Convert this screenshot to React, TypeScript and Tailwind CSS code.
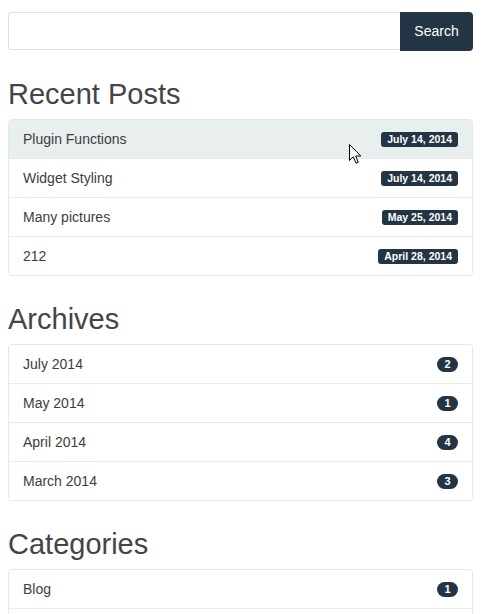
import React from "react";

const font = { fontFamily: '"Liberation Sans", Arial, Helvetica, sans-serif' };

type Row = { label: string; badge: string; kind: "date" | "count"; active?: boolean };

function Badge({ text, kind }: { text: string; kind: "date" | "count" }) {
  if (!text) return null;
  if (kind === "date") {
    return (
      <span className="inline-flex items-center h-[15px] px-[6px] rounded-[3px] bg-[#233444] text-white text-[10.5px] font-bold leading-none pt-[1px]">
        {text}
      </span>
    );
  }
  return (
    <span className="inline-flex items-center justify-center h-[15px] min-w-[21px] px-[6px] rounded-full bg-[#233444] text-white text-[11px] font-bold leading-none">
      {text}
    </span>
  );
}

function Section({ title, rows }: { title: string; rows: Row[] }) {
  return (
    <section>
      <h3 className="mt-[28px] mb-[9px] text-[29px] leading-[31px] text-[#454545] font-normal">{title}</h3>
      <ul className="border border-[#e4e8ea] rounded-[4px] overflow-hidden">
        {rows.map((r, i) => (
          <li
            key={i}
            className={
              "flex items-center justify-between h-[38px] px-[14px] text-[14px] leading-[18px] text-[#3d3d3d] box-content " +
              (i > 0 ? "border-t border-[#e8ebec] " : "") +
              (r.active ? "bg-[#e9eeee]" : "bg-white")
            }
          >
            <span>{r.label}</span>
            <Badge text={r.badge} kind={r.kind} />
          </li>
        ))}
      </ul>
    </section>
  );
}

export default function App() {
  return (
    <div className="relative bg-white w-[487px] h-[614px] overflow-hidden" style={font}>
      <div className="pt-[12px] pl-[8px] pr-[14px]">
        <form className="flex items-start h-[39px]" onSubmit={(e) => e.preventDefault()}>
          <input
            type="text"
            className="flex-1 min-w-0 h-[38px] border border-[#dae1e8] border-r-0 rounded-l-[4px] px-3 text-[14px] outline-none"
          />
          <button
            type="submit"
            className="w-[73px] h-[39px] bg-[#233444] text-white text-[14px] rounded-r-[4px]"
          >
            Search
          </button>
        </form>

        <Section
          title="Recent Posts"
          rows={[
            { label: "Plugin Functions", badge: "July 14, 2014", kind: "date", active: true },
            { label: "Widget Styling", badge: "July 14, 2014", kind: "date" },
            { label: "Many pictures", badge: "May 25, 2014", kind: "date" },
            { label: "212", badge: "April 28, 2014", kind: "date" },
          ]}
        />
        <Section
          title="Archives"
          rows={[
            { label: "July 2014", badge: "2", kind: "count" },
            { label: "May 2014", badge: "1", kind: "count" },
            { label: "April 2014", badge: "4", kind: "count" },
            { label: "March 2014", badge: "3", kind: "count" },
          ]}
        />
        <Section
          title="Categories"
          rows={[
            { label: "Blog", badge: "1", kind: "count" },
            { label: "", badge: "", kind: "count" },
          ]}
        />
      </div>

      <svg
        className="absolute left-[349px] top-[144px]"
        width="13"
        height="21"
        viewBox="0 0 13 21"
      >
        <path
          d="M0.5 0.5 L0.5 16.5 L4.3 12.8 L7 19.2 L9.3 18.2 L6.7 12 L11.8 12 Z"
          fill="#ffffff"
          stroke="#000000"
          strokeWidth="1"
          strokeLinejoin="miter"
        />
      </svg>
    </div>
  );
}
